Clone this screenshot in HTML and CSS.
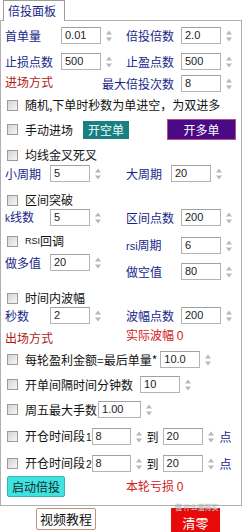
FILE: index.html
```html
<!DOCTYPE html>
<html>
<head>
<meta charset="utf-8">
<link rel="stylesheet" href="styles.css">
</head>
<body>
<div class="tabs"><div class="tab">倍投面板</div></div>
<div class="panel">
  <div class="row sec1 r1">
    <div class="cl"><span class="lbl">首单量</span><span class="inp">0.01</span><svg class="spin" viewBox="0 0 8 16"><path d="M1 6.5L4 2.5L7 6.5Z"/><path d="M1 9.5L4 13.5L7 9.5Z"/></svg></div>
    <div class="cr"><span class="lbl rlbl">倍投倍数</span><span class="inp">2.0</span><svg class="spin" viewBox="0 0 8 16"><path d="M1 6.5L4 2.5L7 6.5Z"/><path d="M1 9.5L4 13.5L7 9.5Z"/></svg></div>
  </div>
  <div class="row sec1 r2">
    <div class="cl"><span class="lbl">止损点数</span><span class="inp">500</span><svg class="spin" viewBox="0 0 8 16"><path d="M1 6.5L4 2.5L7 6.5Z"/><path d="M1 9.5L4 13.5L7 9.5Z"/></svg></div>
    <div class="cr"><span class="lbl rlbl">止盈点数</span><span class="inp">500</span><svg class="spin" viewBox="0 0 8 16"><path d="M1 6.5L4 2.5L7 6.5Z"/><path d="M1 9.5L4 13.5L7 9.5Z"/></svg></div>
  </div>
  <div class="row sec1 r3">
    <div class="cl"><span class="red-dark up2">进场方式</span></div>
    <div class="cr"><span class="lbl rlbl">最大倍投次数</span><span class="inp">8</span><svg class="spin" viewBox="0 0 8 16"><path d="M1 6.5L4 2.5L7 6.5Z"/><path d="M1 9.5L4 13.5L7 9.5Z"/></svg></div>
  </div>
  <div class="crow r4"><span class="cb"></span>随机,下单时秒数为单进空，为双进多</div>
  <div class="crow r5">
    <span class="cb"></span><span class="ctext">手动进场</span>
    <span class="btn-short">开空单</span>
    <span class="btn-long">开多单</span>
  </div>
  <div class="crow r6"><span class="cb"></span>均线金叉死叉</div>
  <div class="row sec2 r7">
    <div class="cl"><span class="lbl">小周期</span><span class="inp">5</span><svg class="spin" viewBox="0 0 8 16"><path d="M1 6.5L4 2.5L7 6.5Z"/><path d="M1 9.5L4 13.5L7 9.5Z"/></svg></div>
    <div class="cr"><span class="lbl narrow">大周期</span><span class="inp">20</span><svg class="spin" viewBox="0 0 8 16"><path d="M1 6.5L4 2.5L7 6.5Z"/><path d="M1 9.5L4 13.5L7 9.5Z"/></svg></div>
  </div>
  <div class="crow r8"><span class="cb"></span>区间突破</div>
  <div class="row sec2 r9">
    <div class="cl"><span class="lbl"><span class="lat k">k</span>线数</span><span class="inp">5</span><svg class="spin" viewBox="0 0 8 16"><path d="M1 6.5L4 2.5L7 6.5Z"/><path d="M1 9.5L4 13.5L7 9.5Z"/></svg></div>
    <div class="cr"><span class="lbl">区间点数</span><span class="inp">200</span><svg class="spin" viewBox="0 0 8 16"><path d="M1 6.5L4 2.5L7 6.5Z"/><path d="M1 9.5L4 13.5L7 9.5Z"/></svg></div>
  </div>
  <div class="split">
    <div class="colL">
      <div class="crow"><span class="cb"></span><span class="lat rsi">RSI</span>回调</div>
      <div class="row sec2 dowhi">
        <div class="cl"><span class="lbl">做多值</span><span class="inp">20</span><svg class="spin" viewBox="0 0 8 16"><path d="M1 6.5L4 2.5L7 6.5Z"/><path d="M1 9.5L4 13.5L7 9.5Z"/></svg></div>
      </div>
    </div>
    <div class="colR">
      <div class="row sec2 rr">
        <div class="cr"><span class="lbl"><span class="lat rs">rsi</span>周期</span><span class="inp">6</span><svg class="spin" viewBox="0 0 8 16"><path d="M1 6.5L4 2.5L7 6.5Z"/><path d="M1 9.5L4 13.5L7 9.5Z"/></svg></div>
      </div>
      <div class="row sec2 rr2">
        <div class="cr"><span class="lbl">做空值</span><span class="inp">80</span><svg class="spin" viewBox="0 0 8 16"><path d="M1 6.5L4 2.5L7 6.5Z"/><path d="M1 9.5L4 13.5L7 9.5Z"/></svg></div>
      </div>
    </div>
  </div>
  <div class="crow r11"><span class="cb"></span>时间内波幅</div>
  <div class="row sec2 r12">
    <div class="cl"><span class="lbl">秒数</span><span class="inp">2</span><svg class="spin" viewBox="0 0 8 16"><path d="M1 6.5L4 2.5L7 6.5Z"/><path d="M1 9.5L4 13.5L7 9.5Z"/></svg></div>
    <div class="cr"><span class="lbl">波幅点数</span><span class="inp">200</span><svg class="spin" viewBox="0 0 8 16"><path d="M1 6.5L4 2.5L7 6.5Z"/><path d="M1 9.5L4 13.5L7 9.5Z"/></svg></div>
  </div>
  <div class="row r13">
    <div class="cl"><span class="red-dark">出场方式</span></div>
    <div class="cr"><span class="red up3">实际波幅 <span class="lat0">0</span></span></div>
  </div>
  <div class="crow r14"><span class="cb"></span><span class="ctext">每轮盈利金额=最后单量*</span><span class="inp m14">10.0</span><svg class="spin" viewBox="0 0 8 16"><path d="M1 6.5L4 2.5L7 6.5Z"/><path d="M1 9.5L4 13.5L7 9.5Z"/></svg></div>
  <div class="crow r15"><span class="cb"></span><span class="ctext">开单间隔时间分钟数</span><span class="inp m15">10</span><svg class="spin" viewBox="0 0 8 16"><path d="M1 6.5L4 2.5L7 6.5Z"/><path d="M1 9.5L4 13.5L7 9.5Z"/></svg></div>
  <div class="crow r16"><span class="cb"></span><span class="ctext">周五最大手数</span><span class="inp m16">1.00</span><svg class="spin" viewBox="0 0 8 16"><path d="M1 6.5L4 2.5L7 6.5Z"/><path d="M1 9.5L4 13.5L7 9.5Z"/></svg></div>
  <div class="crow r17"><span class="cb"></span><span class="ctext">开仓时间段<span class="lat n">1</span></span><span class="inp m17">8</span><svg class="spin" viewBox="0 0 8 16"><path d="M1 6.5L4 2.5L7 6.5Z"/><path d="M1 9.5L4 13.5L7 9.5Z"/></svg><span class="to">到</span><span class="inp">20</span><svg class="spin" viewBox="0 0 8 16"><path d="M1 6.5L4 2.5L7 6.5Z"/><path d="M1 9.5L4 13.5L7 9.5Z"/></svg><span class="pt">点</span></div>
  <div class="crow r18"><span class="cb"></span><span class="ctext">开仓时间段<span class="lat n">2</span></span><span class="inp m17">8</span><svg class="spin" viewBox="0 0 8 16"><path d="M1 6.5L4 2.5L7 6.5Z"/><path d="M1 9.5L4 13.5L7 9.5Z"/></svg><span class="to">到</span><span class="inp">20</span><svg class="spin" viewBox="0 0 8 16"><path d="M1 6.5L4 2.5L7 6.5Z"/><path d="M1 9.5L4 13.5L7 9.5Z"/></svg><span class="pt">点</span></div>
  <div class="crow r19"><span class="btn-start">启动倍投</span><span class="red loss">本轮亏损 <span class="lat0">0</span></span></div>
</div>
<div class="bottom">
  <span class="btn-video">视频教程</span>
  <span class="btn-clear">清零<span class="wm">值 什么值得买</span></span>
</div>
</body>
</html>
```
FILE: styles.css
```css
html, body {
  margin: 0;
  padding: 0;
  background: #fff;
}
body {
  width: 247px;
  height: 532px;
  overflow: hidden;
  font-family: "Noto Sans CJK SC", "Noto Sans", sans-serif;
  font-size: 12px;
  line-height: 16px;
  color: #111;
}
.tabs {
  height: 20px;
  display: flex;
}
.tab {
  position: relative;
  z-index: 1;
  margin-left: 3px;
  width: 62px;
  height: 21px;
  box-sizing: border-box;
  border: 1px solid #9c9c9c;
  border-bottom: none;
  background: #fff;
  color: #1a1f8a;
  padding-left: 4px;
  line-height: 20px;
}
.panel {
  box-sizing: border-box;
  width: 242px;
  height: 486px;
  border: 1px solid #b0b0b0;
  background: #fff;
}
.row {
  display: flex;
  align-items: center;
  height: 17px;
  padding-left: 4px;
}
.cl {
  width: 121px;
  flex: none;
  display: flex;
  align-items: center;
}
.cr {
  display: flex;
  align-items: center;
}
.lbl {
  color: #1a1f8a;
  white-space: nowrap;
  flex: none;
}
.sec1 .cl .lbl { width: 56px; }
.sec1 .cr .lbl { width: 48px; margin-right: 7px; }
.rlbl {
  display: flex;
  justify-content: flex-end;
}
.sec2 .cl .lbl { width: 45px; }
.sec2 .cr .lbl { width: 55px; }
.sec2 .cr .lbl.narrow { width: 45px; }
.inp {
  box-sizing: border-box;
  flex: none;
  width: 40px;
  height: 17px;
  border: 1px solid #b4b4b4;
  border-top-color: #a0a0a0;
  background: #fff;
  font-family: "Liberation Sans", Arial, sans-serif;
  font-size: 11px;
  line-height: 15px;
  padding-left: 3px;
  color: #222;
}
.spin {
  flex: none;
  width: 8px;
  height: 16px;
  margin-left: 4px;
  fill: #b8b8b8;
}
.lat {
  font-family: "Liberation Sans", Arial, sans-serif;
}
.k { font-size: 10px; }
.rsi { font-size: 9px; color: #111; }
.rs { font-size: 11px; }
.n { font-size: 10px; margin-left: 1px; }
.lat0 { font-family: "Liberation Sans", Arial, sans-serif; font-size: 12px; }
.red-dark { color: #b01c1c; }
.red { color: #d01c1c; }
.up2 { margin-top: -3px; }
.up3 { margin-top: -4px; }
.crow {
  display: flex;
  align-items: center;
  height: 16px;
  padding-left: 6px;
  white-space: nowrap;
}
.cb {
  box-sizing: border-box;
  flex: none;
  width: 11px;
  height: 11px;
  border: 1px solid #9a9a9a;
  background: linear-gradient(135deg, #d4d4d4, #f6f6f6);
  margin-right: 7px;
}
.r1 { margin-top: 6px; }
.r2 { margin-top: 9px; }
.r3 { margin-top: 5px; }
.r4 { margin-top: 5px; }
.r5 { margin-top: 6px; height: 21px; }
.btn-short {
  margin-left: 10px;
  width: 46px;
  height: 18px;
  background: #1b7e80;
  color: #e6ffff;
  text-align: center;
  line-height: 18px;
  flex: none;
}
.btn-long {
  margin-left: 38px;
  box-sizing: border-box;
  width: 69px;
  height: 21px;
  background: #4a0a86;
  border: 1px solid #c04a8e;
  color: #fff;
  text-align: center;
  line-height: 19px;
  flex: none;
}
.r6 { margin-top: 7px; }
.r7 { margin-top: 2px; }
.r8 { margin-top: 10px; }
.r9 { margin-top: 1px; }
.split {
  display: flex;
  margin-top: 7px;
}
.colL { width: 125px; flex: none; }
.colR { padding-top: 4px; }
.dowhi { margin-top: 5px; }
.rr { padding-left: 0; }
.rr2 { padding-left: 0; margin-top: 9px; }
.r11 { margin-top: 10px; }
.r12 { margin-top: 1px; }
.r13 { margin-top: 5px; }
.r14 { margin-top: 5px; height: 17px; }
.m14 { margin-left: 3px; }
.r15 { margin-top: 8px; height: 17px; }
.m15 { margin-left: 7px; }
.r16 { margin-top: 8px; height: 17px; }
.m16 { margin-left: 1px; width: 43px; }
.r17 { margin-top: 10px; height: 17px; }
.r18 { margin-top: 10px; height: 17px; }
.m17 { width: 39px; }
.to { margin-left: 4px; margin-right: 4px; }
.pt { margin-left: 5px; color: #1a1f8a; }
.r19 { margin-top: 4px; height: 21px; }
.btn-start {
  box-sizing: border-box;
  flex: none;
  width: 58px;
  height: 21px;
  background: #3ee2df;
  border: 1px solid #36b8b6;
  border-radius: 2px;
  color: #1a2a2a;
  text-align: center;
  line-height: 19px;
}
.loss { margin-left: 61px; }
.bottom {
  display: flex;
  align-items: flex-start;
  padding-left: 36px;
  margin-top: 2px;
}
.btn-video {
  box-sizing: border-box;
  width: 60px;
  height: 22px;
  border: 1px solid #c49080;
  border-radius: 2px;
  background: #fff;
  font-size: 13px;
  line-height: 20px;
  text-align: center;
  color: #111;
}
.btn-clear {
  position: relative;
  margin-left: 75px;
  width: 49px;
  height: 25px;
  background: #e80a0a;
  color: #fff;
  font-size: 13px;
  line-height: 29px;
  text-align: center;
}
.wm {
  position: absolute;
  left: 4px;
  top: -5px;
  font-size: 7px;
  line-height: 9px;
  white-space: nowrap;
  color: rgba(240, 240, 240, 0.9);
  text-shadow: 0 0 1px #555;
}
```
